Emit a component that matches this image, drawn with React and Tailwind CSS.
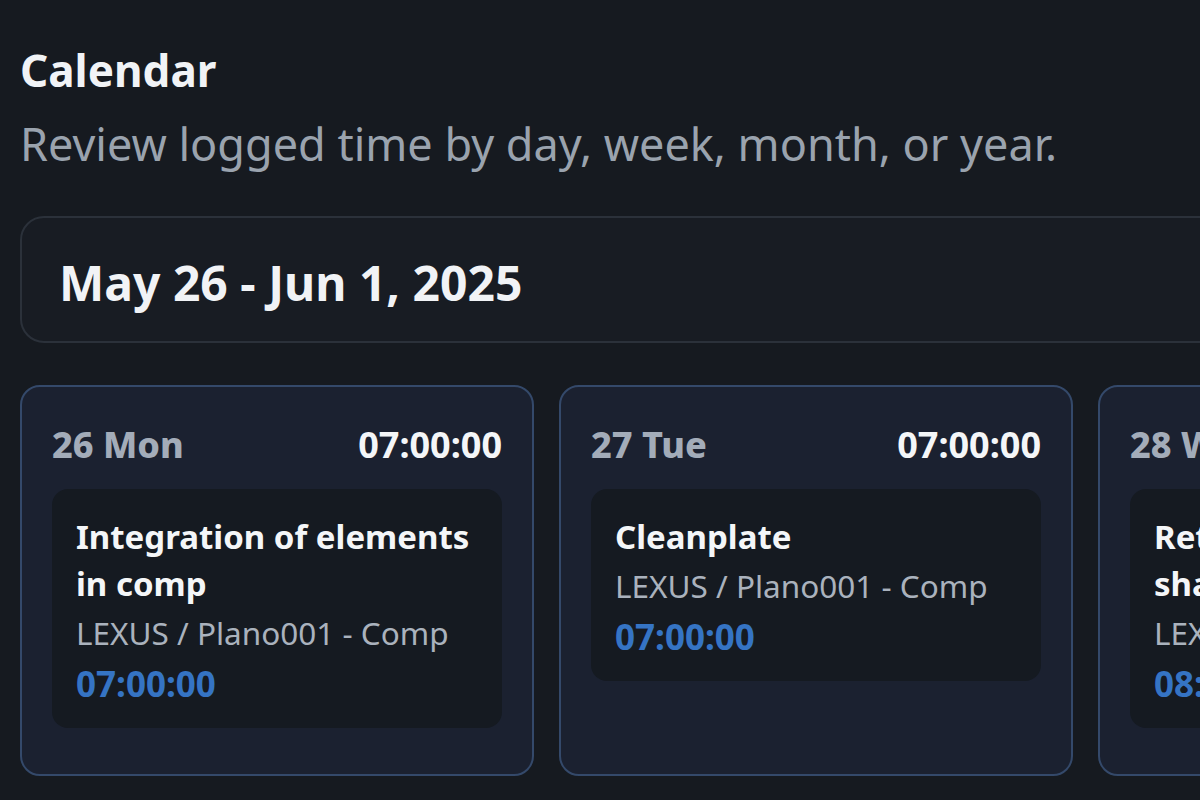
import React from "react";

const days = [
  {
    label: "26 Mon",
    total: "07:00:00",
    entries: [
      { title: "Integration of elements in comp", project: "LEXUS / Plano001 - Comp", time: "07:00:00" },
    ],
  },
  {
    label: "27 Tue",
    total: "07:00:00",
    entries: [{ title: "Cleanplate", project: "LEXUS / Plano001 - Comp", time: "07:00:00" }],
  },
  {
    label: "28 Wed",
    total: "08:00:00",
    entries: [
      { title: "Retouching of car shadows", project: "LEXUS / Plano001 - Comp", time: "08:00:00" },
    ],
  },
];

export default function App() {
  return (
    <div
      className="w-[1200px] h-[800px] overflow-hidden bg-[#161a20]"
      style={{ fontFamily: '"Noto Sans", "Open Sans", sans-serif' }}
    >
      <div className="w-[1600px] px-5 pt-[40px]">
        <h1 className="text-[44px] leading-[60px] font-bold text-[#f1f3f6]">Calendar</h1>
        <p className="mt-[14px] text-[45px] leading-[60px] text-[#9aa3ae]">
          Review logged time by day, week, month, or year.
        </p>

        <div className="mt-[42px] h-[127px] rounded-[24px] border-2 border-[#2b313a] bg-[#181c23] px-[37px] flex items-center">
          <div className="text-[48px] font-bold text-[#f1f3f6] pt-[6px]">May 26 - Jun 1, 2025</div>
        </div>

        <div className="mt-[42px] flex gap-[25px] items-stretch">
          {days.map((d) => (
            <div
              key={d.label}
              className="w-[514px] shrink-0 rounded-[20px] border-2 border-[#34496a] bg-[#1b2130] px-[30px] pt-[30px] pb-[46px]"
            >
              <div className="flex items-center justify-between h-[56px]">
                <span className="text-[36px] font-extrabold text-[#a3acb9]">{d.label}</span>
                <span className="text-[36px] font-bold text-[#f4f6f8]">{d.total}</span>
              </div>
              <div className="mt-[16px] flex flex-col gap-4">
                {d.entries.map((e, i) => (
                  <div key={i} className="rounded-[16px] bg-[#151a21] px-6 pt-[24px] pb-[19px]">
                    <div className="text-[33px] leading-[47px] font-bold text-[#f4f6f8]">{e.title}</div>
                    <div className="text-[31.5px] leading-[51px] text-[#aab2bd]">{e.project}</div>
                    <div className="text-[35px] leading-[51px] font-bold text-[#3574c4]">{e.time}</div>
                  </div>
                ))}
              </div>
            </div>
          ))}
        </div>
      </div>
    </div>
  );
}
